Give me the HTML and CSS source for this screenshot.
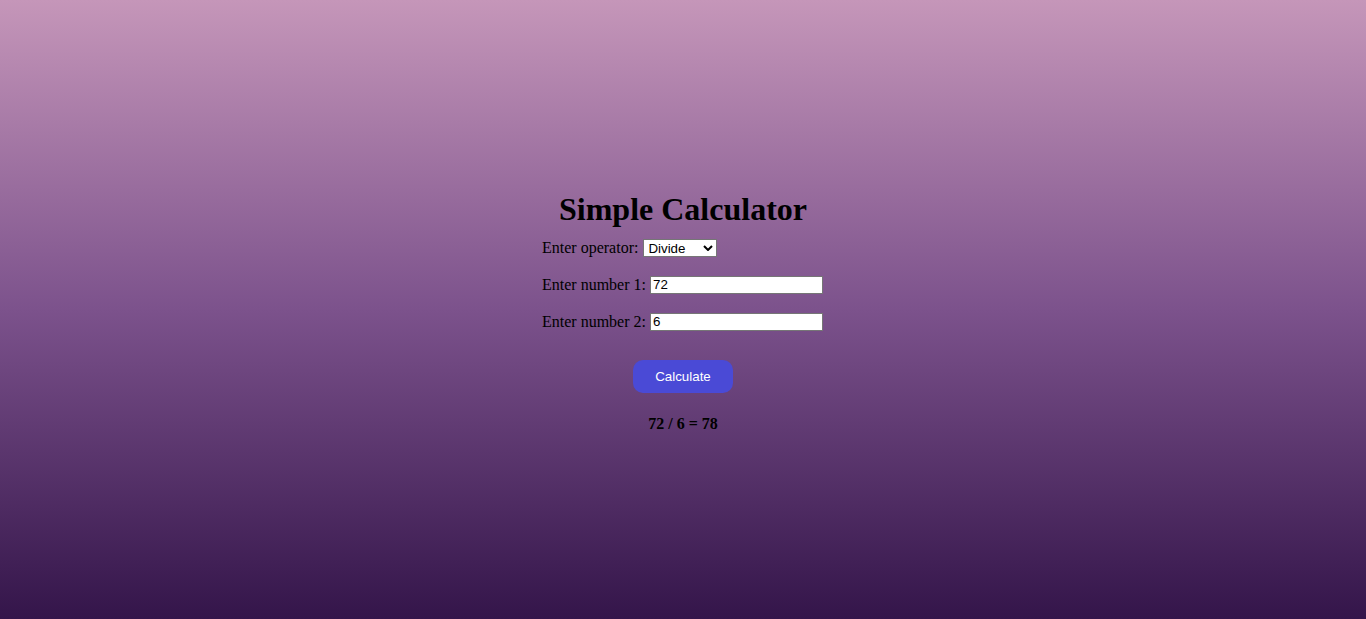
FILE: index.html
```html
<!DOCTYPE html>
<html lang="en">
<head>
<meta charset="utf-8">
<title>Simple Calculator</title>
<link rel="stylesheet" href="styles.css">
</head>
<body>
<main class="calc">
  <h1 class="title">Simple Calculator</h1>
  <div class="row row-first">
    <label for="op">Enter operator:</label>
    <span class="select-wrap">
      <select id="op" class="select">
        <option>Add</option>
        <option>Subtract</option>
        <option>Multiply</option>
        <option selected>Divide</option>
      </select>
      <svg class="chevron" width="10" height="6" viewBox="0 0 10 6"><path d="M1 1 L5 5 L9 1" fill="none" stroke="#000" stroke-width="2"/></svg>
    </span>
  </div>
  <div class="row">
    <label for="n1">Enter number 1:</label>
    <input id="n1" class="num" type="text" value="72">
  </div>
  <div class="row">
    <label for="n2">Enter number 2:</label>
    <input id="n2" class="num" type="text" value="6">
  </div>
  <div class="actions">
    <button class="btn" type="button">Calculate</button>
  </div>
  <p class="result">72 / 6 = 78</p>
</main>
</body>
</html>
```
FILE: styles.css
```css
html, body {
  margin: 0;
  height: 100%;
}
body {
  background: linear-gradient(to bottom, #c596b9 0%, #7c528c 50%, #34154a 100%);
  font-family: "Liberation Serif", "Times New Roman", serif;
  font-size: 16px;
  color: #000;
}
.calc {
  width: 282px;
  margin: 0 auto;
  padding-top: 191px;
}
.title {
  margin: 0;
  font-size: 32px;
  line-height: 37px;
  font-weight: bold;
  text-align: center;
  white-space: nowrap;
}
.row {
  display: flex;
  align-items: center;
  gap: 4px;
  height: 19px;
  margin-top: 18px;
}
.row-first {
  margin-top: 10px;
}
.select-wrap {
  position: relative;
  display: inline-block;
  height: 18px;
  margin-left: 1px;
}
.select {
  appearance: none;
  -webkit-appearance: none;
  box-sizing: border-box;
  width: 74px;
  height: 18px;
  margin: 0;
  padding: 0 0 0 4px;
  border: 1px solid #767676;
  border-radius: 0;
  background: #fff;
  font-family: "Liberation Sans", Arial, sans-serif;
  font-size: 13.333px;
  color: #000;
}
.chevron {
  position: absolute;
  right: 4px;
  top: 6px;
  pointer-events: none;
}
.num {
  box-sizing: border-box;
  width: 173px;
  height: 18px;
  margin: 0;
  padding: 0 2px;
  border: 1px solid #767676;
  border-radius: 0;
  background: #fff;
  font-family: "Liberation Sans", Arial, sans-serif;
  font-size: 13.333px;
  color: #000;
}
.actions {
  display: flex;
  justify-content: center;
  margin-top: 29px;
}
.btn {
  width: 100px;
  height: 33px;
  border: none;
  border-radius: 10px;
  background: #4a4ad6;
  color: #fff;
  font-family: "Liberation Sans", Arial, sans-serif;
  font-size: 13.333px;
  padding: 0;
}
.result {
  margin: 22px 0 0;
  line-height: 18px;
  font-weight: bold;
  text-align: center;
}
```
